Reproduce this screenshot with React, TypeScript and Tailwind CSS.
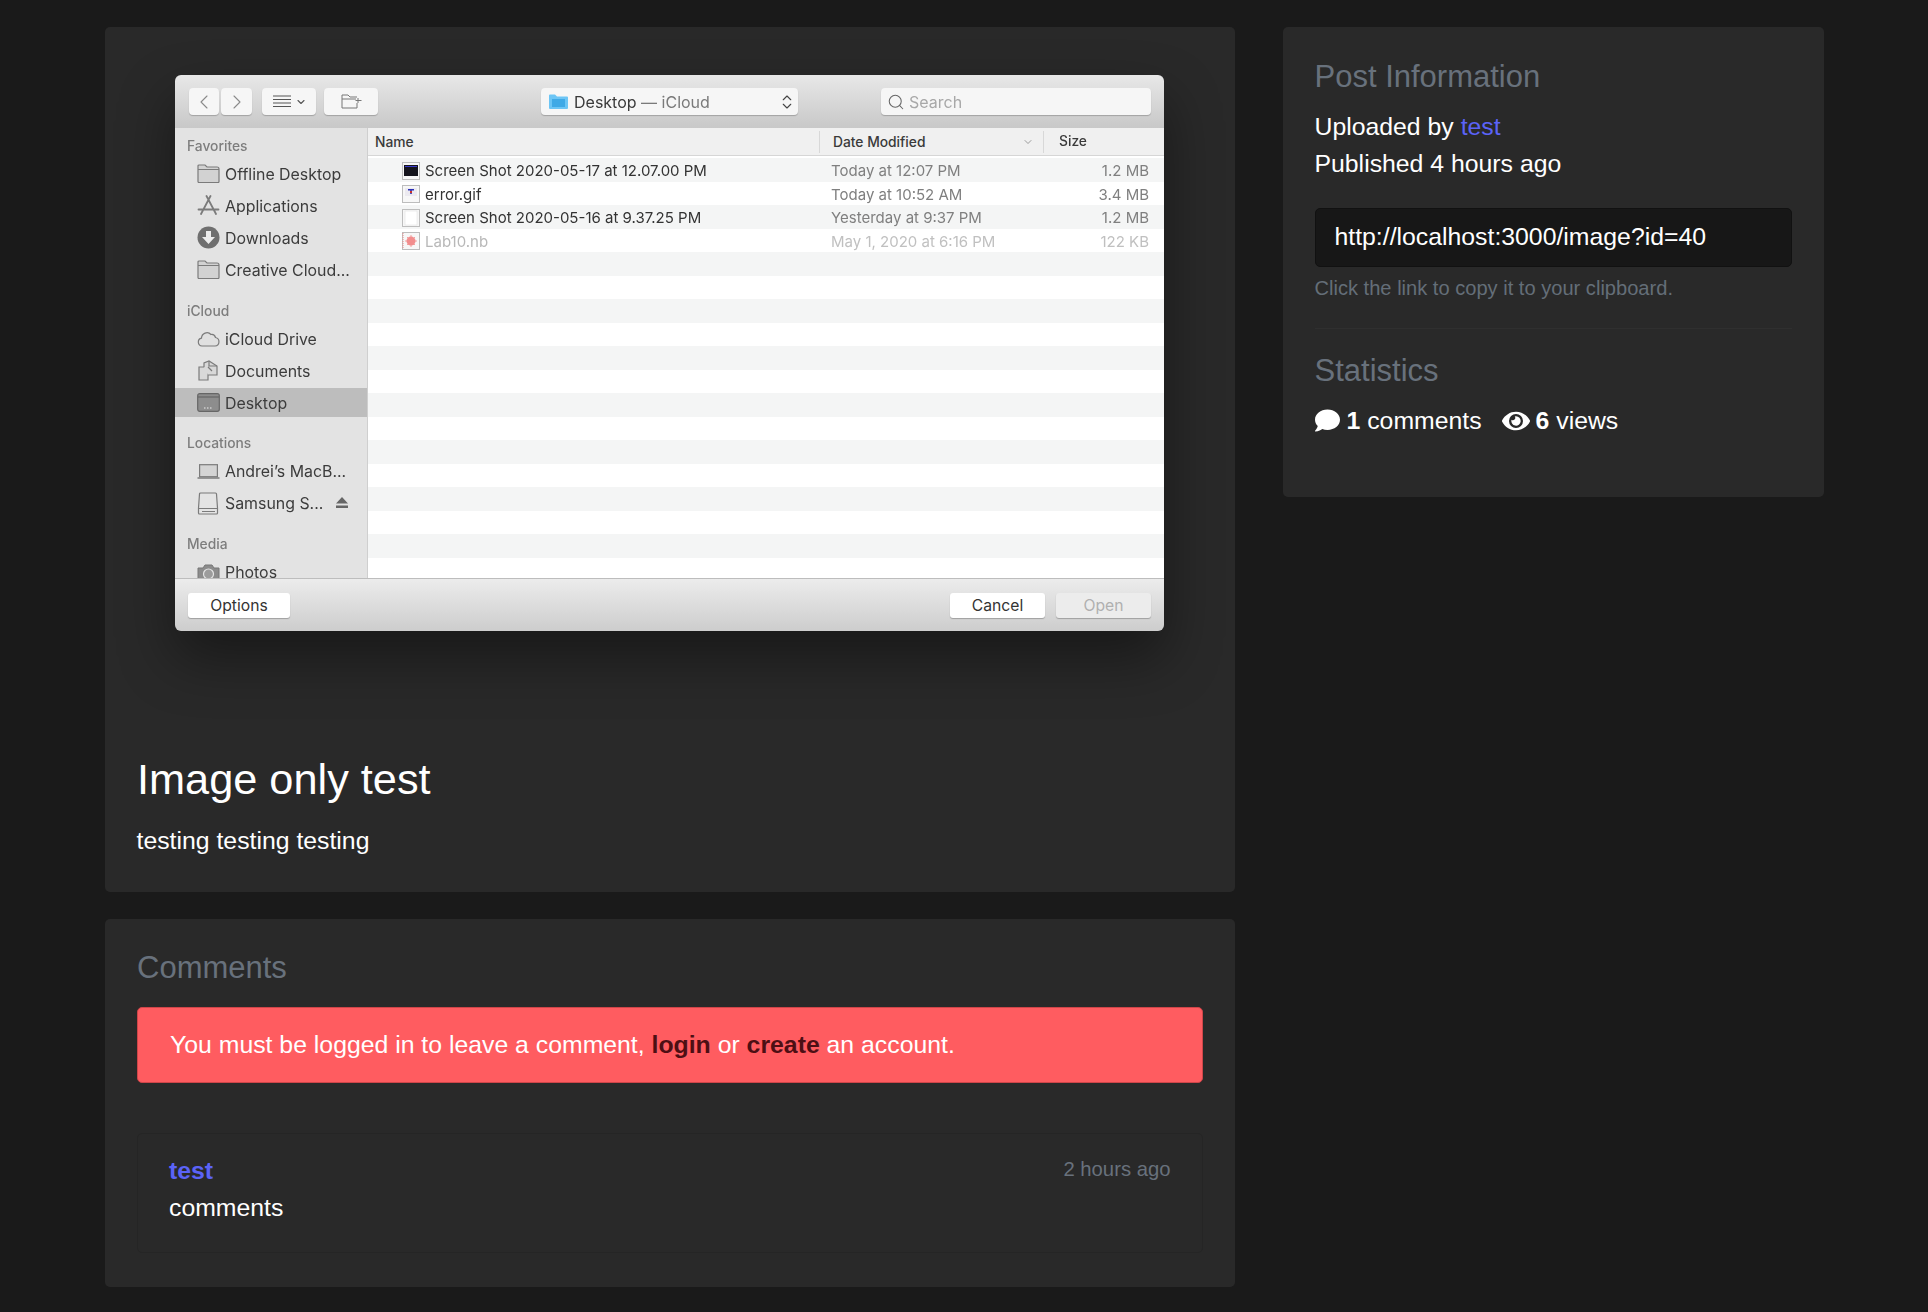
import React from "react";
import { FaComment, FaEye } from "react-icons/fa";
import { Search, ChevronsUpDown, ChevronLeft, ChevronRight, ChevronDown } from "lucide-react";

const G = "#7b7b7b";

const FolderIcon = () => (
  <svg width="23" height="19" viewBox="0 0 23 19">
    <path d="M1 17.5V2a1 1 0 0 1 1-1h6l2 2h10a2 2 0 0 1 2 2v12.5a1 1 0 0 1-1 1H2a1 1 0 0 1-1-1z" fill="#d2d2d2" stroke={G} strokeWidth="1.2" />
    <path d="M1 5.5h21" stroke={G} strokeWidth="1.2" />
  </svg>
);
const AppsIcon = () => (
  <svg width="23" height="21" viewBox="0 0 23 21" fill="none" stroke={G} strokeWidth="1.8" strokeLinecap="round">
    <path d="M9.500 1L19 19M13.500 1L4 19M1.500 14.500h20" />
  </svg>
);
const DownloadIcon = () => (
  <svg width="23" height="23" viewBox="0 0 23 23">
    <circle cx="11.5" cy="11.5" r="11" fill="#6f6f6f" />
    <path d="M9 5h5v6h4l-6.500 7L5 11h4z" fill="#ececec" />
  </svg>
);
const CloudIcon = () => (
  <svg width="23" height="17" viewBox="0 0 23 17">
    <path d="M5 16a4 4 0 0 1-.500-7.900A5.500 5.500 0 0 1 14 4.500a4 4 0 0 1 4.500 3A4.300 4.300 0 0 1 18 16z" fill="#e0e0e0" stroke={G} strokeWidth="1.2" />
  </svg>
);
const DocsIcon = () => (
  <svg width="23" height="21" viewBox="0 0 23 21" fill="#d8d8d8" stroke={G} strokeWidth="1.2">
    <path d="M2 7h9v13H2z" />
    <path d="M7 7V3l5-2 8 5v9h-9" />
    <path d="M12 1v5h8M11 7l4 4" fill="none" />
  </svg>
);
const DesktopIcon = () => (
  <svg width="23" height="19" viewBox="0 0 23 19">
    <rect x="0.700" y="0.700" width="21.600" height="17.600" rx="2" fill="#8d8d8d" stroke="#666" strokeWidth="1.200" />
    <path d="M1 4h21" stroke="#666" strokeWidth="1.200" />
    <path d="M7 15h1.500M10 15h1.500M13 15h1.500" stroke="#eee" strokeWidth="1.200" />
  </svg>
);
const LaptopIcon = () => (
  <svg width="23" height="15" viewBox="0 0 23 15">
    <rect x="2.600" y="0.700" width="17.800" height="12" fill="#d4d4d4" stroke={G} strokeWidth="1.200" />
    <path d="M0.500 14h22" stroke={G} strokeWidth="1.500" />
  </svg>
);
const DriveIcon = () => (
  <svg width="23" height="23" viewBox="0 0 23 23">
    <path d="M4.500 1h14a1 1 0 0 1 1 1l1 14v5a1 1 0 0 1-1 1h-17a1 1 0 0 1-1-1v-5l1-14a1 1 0 0 1 1-1z" fill="#e4e4e4" stroke={G} strokeWidth="1.200" />
    <path d="M2 16.500h19M5 19.500h13" stroke={G} strokeWidth="1.100" />
  </svg>
);
const CameraIcon = () => (
  <svg width="23" height="19" viewBox="0 0 23 19">
    <path d="M1 5h5l2-3h7l2 3h5v14H1z" fill="#8c8c8c" stroke="#777" />
    <circle cx="11.500" cy="11" r="5" fill="#9c9c9c" stroke="#e3e3e3" strokeWidth="1.200" />
  </svg>
);

const SideLabel = ({ children, className = "mt-[13px]" }: { children: React.ReactNode; className?: string }) => (
  <div className={`h-[24px] pl-[12px] text-[13.800px] leading-[24px] font-medium text-[#7d7d7d] ${className}`}>{children}</div>
);

const SideItem = ({ icon, label, active, eject }: { icon: React.ReactNode; label: string; active?: boolean; eject?: boolean }) => (
  <div className={active ? "h-[29px] my-[1.5px] flex items-center pl-[22px] bg-[#bdbdbd]" : "h-[32px] flex items-center pl-[22px]"}>
    <span className="w-[23px] flex justify-center shrink-0">{icon}</span>
    <span className="ml-[5px] pt-[1px] text-[15.900px] text-[#3c3c3c] whitespace-nowrap">{label}</span>
    {eject && (
      <svg width="12" height="12" viewBox="0 0 12 12" className="ml-auto mr-[19px]" fill="#666">
        <path d="M6 0l6 6.500H0zM0 8.500h12V11H0z" />
      </svg>
    )}
  </div>
);

const files = [
  { name: "Screen Shot 2020-05-17 at 12.07.00 PM", date: "Today at 12:07 PM", size: "1.2 MB", kind: "dark" },
  { name: "error.gif", date: "Today at 10:52 AM", size: "3.4 MB", kind: "gif" },
  { name: "Screen Shot 2020-05-16 at 9.37.25 PM", date: "Yesterday at 9:37 PM", size: "1.2 MB", kind: "light" },
  { name: "Lab10.nb", date: "May 1, 2020 at 6:16 PM", size: "122 KB", kind: "nb" },
];

const FileIcon = ({ kind }: { kind: string }) => (
  <svg width="18" height="18" viewBox="0 0 18 18">
    <rect x="0.500" y="0.500" width="17" height="17" fill="#f7f7f7" stroke="#bdbdbd" />
    {kind === "dark" && <rect x="2" y="3" width="14" height="11" fill="#14141c" />}
    {kind === "dark" && <rect x="3" y="4" width="12" height="1" fill="#3a3ac8" />}
    {kind === "gif" && <rect x="3" y="3" width="12" height="8" fill="#eceaf0" />}
    {kind === "gif" && <path d="M6 4h6v1.500H9.800V9H8.200V5.500H6z" fill="#2b2fb5" />}
    {kind === "gif" && <rect x="8" y="6" width="2" height="2" fill="#c8342c" />}
    {kind === "light" && <rect x="3" y="2" width="12" height="14" fill="#ffffff" stroke="#dcdcdc" strokeWidth="0.500" />}
    {kind === "nb" && <circle cx="9" cy="9" r="4.500" fill="#f28e8e" />}
    {kind === "nb" && <path d="M9 3v12M3 9h12M5 5l8 8M13 5l-8 8" stroke="#f28e8e" strokeWidth="0.800" />}
    {kind === "nb" && <path d="M1 1v16" stroke="#ee8888" strokeDasharray="1 1" />}
  </svg>
);

const ToolBtn = ({ className, children }: { className: string; children?: React.ReactNode }) => (
  <div className={`h-[27px] rounded-[4px] bg-[#f6f6f6] shadow-[0_1px_1px_rgba(0,0,0,0.22)] flex items-center ${className}`}>{children}</div>
);

const FooterBtn = ({ className, children }: { className: string; children: React.ReactNode }) => (
  <div className={`h-[25px] rounded-[3px] flex items-center justify-center text-[15.700px] shadow-[0_1px_1px_rgba(0,0,0,0.25)] ${className}`}>{children}</div>
);

const Dialog = () => (
  <div className="w-[989px] h-[556px] ml-[70.500px] rounded-[6px] shadow-[0_26px_56px_rgba(0,0,0,0.42)]">
    <div className="w-full h-full rounded-[6px] overflow-hidden flex flex-col blur-[0.3px] font-['Inter','Liberation_Sans',sans-serif]">
      <div className="h-[53px] shrink-0 flex items-center pl-[14px] bg-gradient-to-b from-[#e8e8e8] to-[#c8c8c8]">
        <ToolBtn className="w-[30px] justify-center">
          <ChevronLeft size={24} strokeWidth={1.1} color="#8a8a8a" />
        </ToolBtn>
        <ToolBtn className="w-[31px] ml-[2px] justify-center">
          <ChevronRight size={24} strokeWidth={1.1} color="#8a8a8a" />
        </ToolBtn>
        <ToolBtn className="w-[54px] ml-[10px] pl-[11px]">
          <svg width="18" height="13" viewBox="0 0 18 13" stroke="#555" strokeWidth="1">
            <path d="M0 1h18M0 4.500h18M0 8h18M0 11.500h18" />
          </svg>
          <ChevronDown size={12} strokeWidth={2.2} color="#555" className="ml-[4px]" />
        </ToolBtn>
        <ToolBtn className="w-[54px] ml-[8px] pl-[17px]">
          <svg width="21" height="15" viewBox="0 0 21 15" fill="none" stroke="#777" strokeWidth="1">
            <path d="M1 14V1h6l2 2h7M1 5h14M1 14h15V9M17 4v5M14.500 6.500h6" />
          </svg>
        </ToolBtn>
        <ToolBtn className="w-[257px] ml-[163px] pl-[8px]">
          <svg width="19" height="15" viewBox="0 0 19 15">
            <path d="M0 14V1.500a1 1 0 0 1 1-1h5l2 2h10a1 1 0 0 1 1 1V14a1 1 0 0 1-1 1H1a1 1 0 0 1-1-1z" fill="#6cc5f5" />
            <rect x="3" y="5" width="13" height="8" fill="#3fa9e6" />
          </svg>
          <span className="ml-[6px] pt-[2px] text-[16px] text-[#3a3a3a] whitespace-nowrap">
            Desktop <span className="text-[#7a7a7a]">— iCloud</span>
          </span>
          <ChevronsUpDown size={18} strokeWidth={1.5} color="#444" className="ml-auto mr-[2px]" />
        </ToolBtn>
        <ToolBtn className="w-[270px] ml-[83px] pl-[6px]">
          <Search size={18} strokeWidth={1.4} color="#666" />
          <span className="ml-[4px] pt-[2px] text-[16px] text-[#a8a8a8]">Search</span>
        </ToolBtn>
      </div>
      <div className="h-[450px] flex shrink-0">
        <div className="w-[193px] shrink-0 h-full overflow-hidden bg-[#e3e3e3] border-r border-[#cfcfcf]">
          <div className="-mt-[7.500px]">
            <SideLabel>Favorites</SideLabel>
            <SideItem icon={<FolderIcon />} label="Offline Desktop" />
            <SideItem icon={<AppsIcon />} label="Applications" />
            <SideItem icon={<DownloadIcon />} label="Downloads" />
            <SideItem icon={<FolderIcon />} label="Creative Cloud..." />
            <SideLabel>iCloud</SideLabel>
            <SideItem icon={<CloudIcon />} label="iCloud Drive" />
            <SideItem icon={<DocsIcon />} label="Documents" />
            <SideItem icon={<DesktopIcon />} label="Desktop" active />
            <SideLabel className="mt-[14px]">Locations</SideLabel>
            <SideItem icon={<LaptopIcon />} label="Andrei’s MacB..." />
            <SideItem icon={<DriveIcon />} label="Samsung S..." eject />
            <SideLabel>Media</SideLabel>
            <SideItem icon={<CameraIcon />} label="Photos" />
          </div>
        </div>
        <div className="flex-1 bg-white overflow-hidden">
          <div className="h-[28px] bg-[#f0f0f0] border-b border-[#d6d6d6] flex items-center text-[13.800px] font-medium text-[#3a3a3a]">
            <span className="w-[452px] pl-[7px] h-[22px] leading-[22px] border-r border-[#d8d8d8]">Name</span>
            <span className="w-[224px] pl-[13px] pr-[9px] h-[22px] leading-[22px] border-r border-[#d8d8d8] flex items-center justify-between">
              Date Modified
              <ChevronDown size={12} strokeWidth={1.4} color="#777" />
            </span>
            <span className="pl-[15px]">Size</span>
          </div>
          <div className="pt-[2px]">
            {Array.from({ length: 18 }).map((_, i) => {
              const f = files[i];
              const dim = f?.kind === "nb";
              return (
                <div key={i} className={`h-[23.5px] pt-[2px] flex items-center text-[15px] ${i % 2 === 0 ? "bg-[#f4f5f5]" : "bg-white"}`}>
                  {f && (
                    <>
                      <span className="ml-[34px] w-[18px] flex"><FileIcon kind={f.kind} /></span>
                      <span className={`ml-[5px] w-[406px] whitespace-nowrap ${dim ? "text-[#b8b8b8]" : "text-[#333333]"}`}>{f.name}</span>
                      <span className={`w-[216px] whitespace-nowrap ${dim ? "text-[#c0c0c0]" : "text-[#7f7f7f]"}`}>{f.date}</span>
                      <span className={`w-[102px] text-right whitespace-nowrap ${dim ? "text-[#c0c0c0]" : "text-[#7f7f7f]"}`}>{f.size}</span>
                    </>
                  )}
                </div>
              );
            })}
          </div>
        </div>
      </div>
      <div className="flex-1 flex items-center pl-[13px] pr-[13px] border-t border-[#bdbdbd] bg-gradient-to-b from-[#ececec] to-[#cdcdcd]">
        <FooterBtn className="w-[102px] bg-white text-[#333333]">Options</FooterBtn>
        <FooterBtn className="w-[95px] ml-auto bg-white text-[#333333]">Cancel</FooterBtn>
        <FooterBtn className="w-[95px] ml-[11px] bg-[#ececec] text-[#b0b0b0]">Open</FooterBtn>
      </div>
    </div>
  </div>
);

const Heading = ({ children, className = "" }: { children: React.ReactNode; className?: string }) => (
  <h2 className={`h-[40px] pt-[1px] text-[31px] leading-[40px] text-[#68717c] ${className}`}>{children}</h2>
);

export default function App() {
  return (
    <div className="min-h-[1312px] bg-[#1a1a1a] pt-[27px] pl-[104.500px] flex items-start gap-[48px] text-white text-[24.800px] leading-[37px] font-['Liberation_Sans',Arial,sans-serif]">
      <div className="w-[1130px] flex flex-col gap-[27px]">
        <section className="bg-[#292929] rounded-[5px] pt-[48px] pb-[33px]">
          <Dialog />
          <h1 className="mt-[121px] ml-[32.500px] text-[43.300px] leading-[54px]">Image only test</h1>
          <p className="mt-[16px] ml-[32px]">testing testing testing</p>
        </section>
        <section className="bg-[#292929] rounded-[5px] pl-[32.500px] pr-[32px] pt-[28px] pb-[34px]">
          <Heading>Comments</Heading>
          <div className="mt-[20px] h-[76px] flex items-center pl-[32px] pb-[2px] rounded-[5px] bg-[#ff5c60] border border-[#cf4549]">
            <span>
              You must be logged in to leave a comment, <b className="text-[#4d0f14]">login</b> or <b className="text-[#4d0f14]">create</b> an account.
            </span>
          </div>
          <div className="mt-[50px] h-[120px] pt-[18px] px-[31px] rounded-[5px] border border-[#252525] flex justify-between">
            <div>
              <div className="font-bold text-[#5b63f7]">test</div>
              <div>comments</div>
            </div>
            <div className="text-[20.300px] text-[#68717c] leading-[34px]">2 hours ago</div>
          </div>
        </section>
      </div>
      <aside className="w-[541.500px] h-[470px] bg-[#292929] rounded-[5px] px-[32px] pt-[29px]">
        <Heading>Post Information</Heading>
        <div className="mt-[12px]">
          Uploaded by <span className="text-[#5b63f7]">test</span>
        </div>
        <div>Published 4 hours ago</div>
        <div className="mt-[26px] h-[59px] flex items-center pl-[19px] pb-[2px] rounded-[5px] bg-[#171717] border border-[#111111]">http://localhost:3000/image?id=40</div>
        <p className="mt-[9px] text-[20.100px] leading-[24px] text-[#646e78]">Click the link to copy it to your clipboard.</p>
        <div className="mt-[28px] h-px bg-[#2f2f2f]"></div>
        <Heading className="mt-[21px]">Statistics</Heading>
        <div className="mt-[12px] flex items-center">
          <FaComment size={25} />
          <span className="ml-[7px]"><b>1</b> comments</span>
          <FaEye size={28} className="ml-[20px]" />
          <span className="ml-[6px]"><b>6</b> views</span>
        </div>
      </aside>
    </div>
  );
}
